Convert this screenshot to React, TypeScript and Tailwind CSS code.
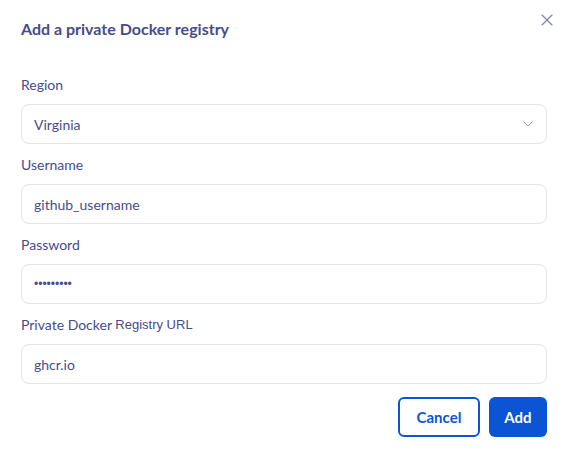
import { X, ChevronDown } from 'lucide-react';

const font = { fontFamily: 'Lato, "Open Sans", sans-serif' };

function Field({ label, value, select, secret }: { label: React.ReactNode; value: string; select?: boolean; secret?: boolean }) {
  return (
    <div className="flex flex-col">
      <label className="h-5 text-[14px] leading-5 text-[#464d8a]">{label}</label>
      <div className="mt-[9px] flex h-10 items-center justify-between rounded-lg border border-[#e3e3e8] bg-white pl-3 pr-[10px]">
        <span
          className={secret ? 'text-[12px] text-[#464d8a]' : 'text-[14px] text-[#464d8a]'}
          style={secret ? { fontFamily: '"Liberation Sans", Arial, sans-serif' } : undefined}
        >
          {value}
        </span>
        {select && <ChevronDown className="h-4 w-4 text-[#8f94bb]" strokeWidth={1.5} />}
      </div>
    </div>
  );
}

export default function App() {
  return (
    <div className="relative h-[467px] w-[567px] bg-white" style={font}>
      <button className="absolute right-[10px] top-[10px] text-[#7f85b0]">
        <X className="h-5 w-5" strokeWidth={1.4} />
      </button>
      <div className="flex flex-col pl-[21px] pr-[20px] pt-[19px]">
        <h2 className="h-5 text-[16px] font-bold leading-5 text-[#464d8a]">Add a private Docker registry</h2>
        <div className="mt-9 flex flex-col gap-[11px]">
          <Field label="Region" value="Virginia" select />
          <Field label="Username" value="github_username" />
          <Field label="Password" value="•••••••••" secret />
          <Field
            label={
              <>
                Private Docker{' '}
                <span style={{ fontFamily: '"Liberation Sans", Arial, sans-serif' }} className="relative -top-px text-[13px]">
                  Registry URL
                </span>
              </>
            }
            value="ghcr.io"
          />
        </div>
        <div className="mt-[13px] flex justify-end gap-[9px]">
          <button className="h-10 w-[82px] rounded-md border-2 border-[#0b55d4] text-[15px] font-bold text-[#0b55d4]">
            Cancel
          </button>
          <button className="h-10 w-[58px] rounded-md bg-[#0b55d4] text-[15px] font-bold text-white">Add</button>
        </div>
      </div>
    </div>
  );
}
